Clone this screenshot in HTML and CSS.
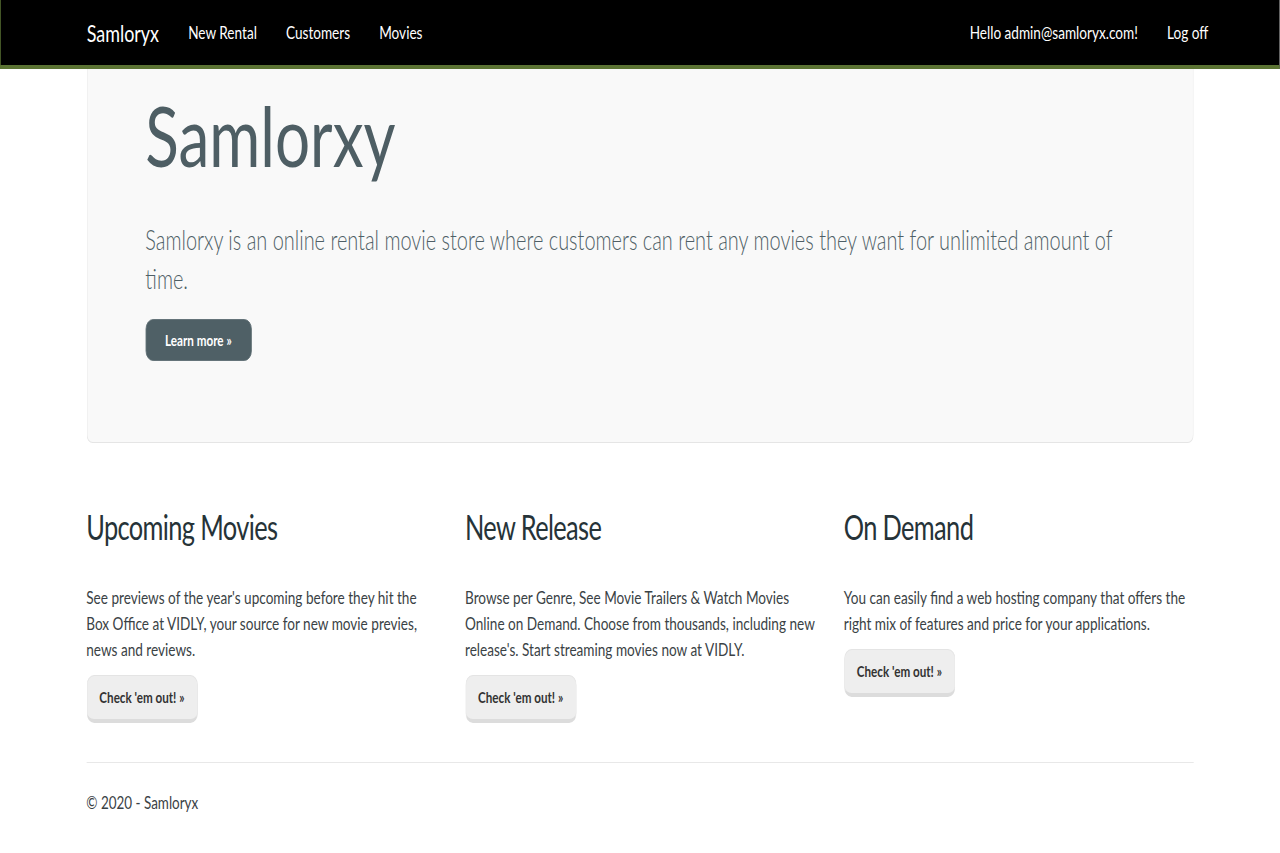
FILE: index.html
```html
<!DOCTYPE html>
<html lang="en">
<head>
<meta charset="utf-8">
<title>Home Page - Samloryx</title>
<link rel="stylesheet" href="styles.css">
</head>
<body>
<div class="page">
  <nav class="navbar">
    <div class="container nav-inner">
      <a class="brand" href="#">Samloryx</a>
      <ul class="nav">
        <li><a href="#">New Rental</a></li>
        <li><a href="#">Customers</a></li>
        <li><a href="#">Movies</a></li>
      </ul>
      <ul class="nav nav-right">
        <li><a href="#">Hello admin@samloryx.com!</a></li>
        <li><a href="#">Log off</a></li>
      </ul>
    </div>
  </nav>
  <main class="container">
    <section class="jumbotron">
      <h1 class="jumbo-title">Samlorxy</h1>
      <p class="lead">Samlorxy is an online rental movie store where customers can rent any movies they want for unlimited amount of time.</p>
      <div><a class="btn btn-primary" href="#">Learn more &raquo;</a></div>
    </section>
    <section class="row">
      <div class="col">
        <h2>Upcoming Movies</h2>
        <p>See previews of the year's upcoming before they hit the Box Office at VIDLY, your source for new movie previes, news and reviews.</p>
        <div><a class="btn btn-default" href="#">Check 'em out! &raquo;</a></div>
      </div>
      <div class="col">
        <h2>New Release</h2>
        <p>Browse per Genre, See Movie Trailers &amp; Watch Movies Online on Demand. Choose from thousands, including new release's. Start streaming movies now at VIDLY.</p>
        <div><a class="btn btn-default" href="#">Check 'em out! &raquo;</a></div>
      </div>
      <div class="col">
        <h2>On Demand</h2>
        <p>You can easily find a web hosting company that offers the right mix of features and price for your applications.</p>
        <div><a class="btn btn-default" href="#">Check 'em out! &raquo;</a></div>
      </div>
    </section>
    <hr class="divider">
    <footer class="footer">
      <p>&copy; 2020 - Samloryx</p>
    </footer>
  </main>
</div>
</body>
</html>
```
FILE: styles.css
```css
html, body {
  margin: 0;
  padding: 0;
  background: #fff;
  overflow: hidden;
}

body {
  font-family: Lato, "Open Sans", Arial, sans-serif;
  color: #444;
}

/* The reference is rendered horizontally condensed; the whole page is
   laid out at full size and squeezed along x. */
.page {
  width: 1713px;
  transform: scaleX(0.747);
  transform-origin: 0 0;
}

.container {
  width: 1482px;
  margin: 0 auto;
}

a { text-decoration: none; }

/* Navbar */
.navbar {
  background: #000;
  height: 65px;
  border-bottom: 4px solid #5b7333;
  border-left: 1px solid #5b7333;
}

.nav-inner {
  display: flex;
  align-items: center;
  height: 65px;
}

.brand {
  color: #fff;
  font-size: 24px;
  line-height: 65px;
  padding-right: 19.5px;
}

.nav {
  display: flex;
  list-style: none;
  margin: 0;
  padding: 0;
}

.nav a {
  display: block;
  color: #fff;
  font-size: 18.2px;
  line-height: 65px;
  padding: 0 19.5px;
}

.nav-right {
  margin-left: auto;
  margin-right: -39px;
}

/* Jumbotron */
.jumbotron {
  background: #f9f9f9;
  border: 1px solid #e5e5e5;
  border-top: none;
  border-radius: 0 0 8px 8px;
  padding: 21px 78px 81px;
  margin-bottom: 39px;
}

.jumbo-title {
  font-size: 83px;
  font-weight: 400;
  line-height: 1.1;
  color: #4e5e64;
  margin: 0 0 40px;
}

.lead {
  font-size: 26.7px;
  font-weight: 300;
  line-height: 39px;
  color: #4f5f66;
  margin: 0 0 20px;
}

.btn {
  display: inline-block;
  font-weight: 700;
  border-radius: 10px;
  box-sizing: border-box;
}

.btn-primary {
  background: #4f6066;
  color: #fff;
  border: 1px solid #5c6c72;
  font-size: 15.6px;
  line-height: 40px;
  padding: 0 25.5px;
}

.btn-default {
  background: #eee;
  color: #333;
  border: 1px solid #e4e4e4;
  border-bottom: 4px solid #dcdcdc;
  font-size: 15.6px;
  line-height: 43px;
  padding: 0 16.5px;
}

/* Columns */
.row {
  display: grid;
  grid-template-columns: repeat(3, 1fr);
  column-gap: 39px;
}

.col h2 {
  font-size: 34px;
  font-weight: 400;
  letter-spacing: -0.85px;
  line-height: 1.1;
  color: #263338;
  margin: 26px 0 38px;
}

.col p {
  font-size: 18.2px;
  line-height: 26px;
  color: #3a4245;
  margin: 0 0 13px;
}

.divider {
  border: 0;
  border-top: 1px solid #e8e8e8;
  margin: 39px 0 26px;
}

.footer p {
  font-size: 18px;
  line-height: 26px;
  color: #3a4245;
  margin: 0;
}
```
